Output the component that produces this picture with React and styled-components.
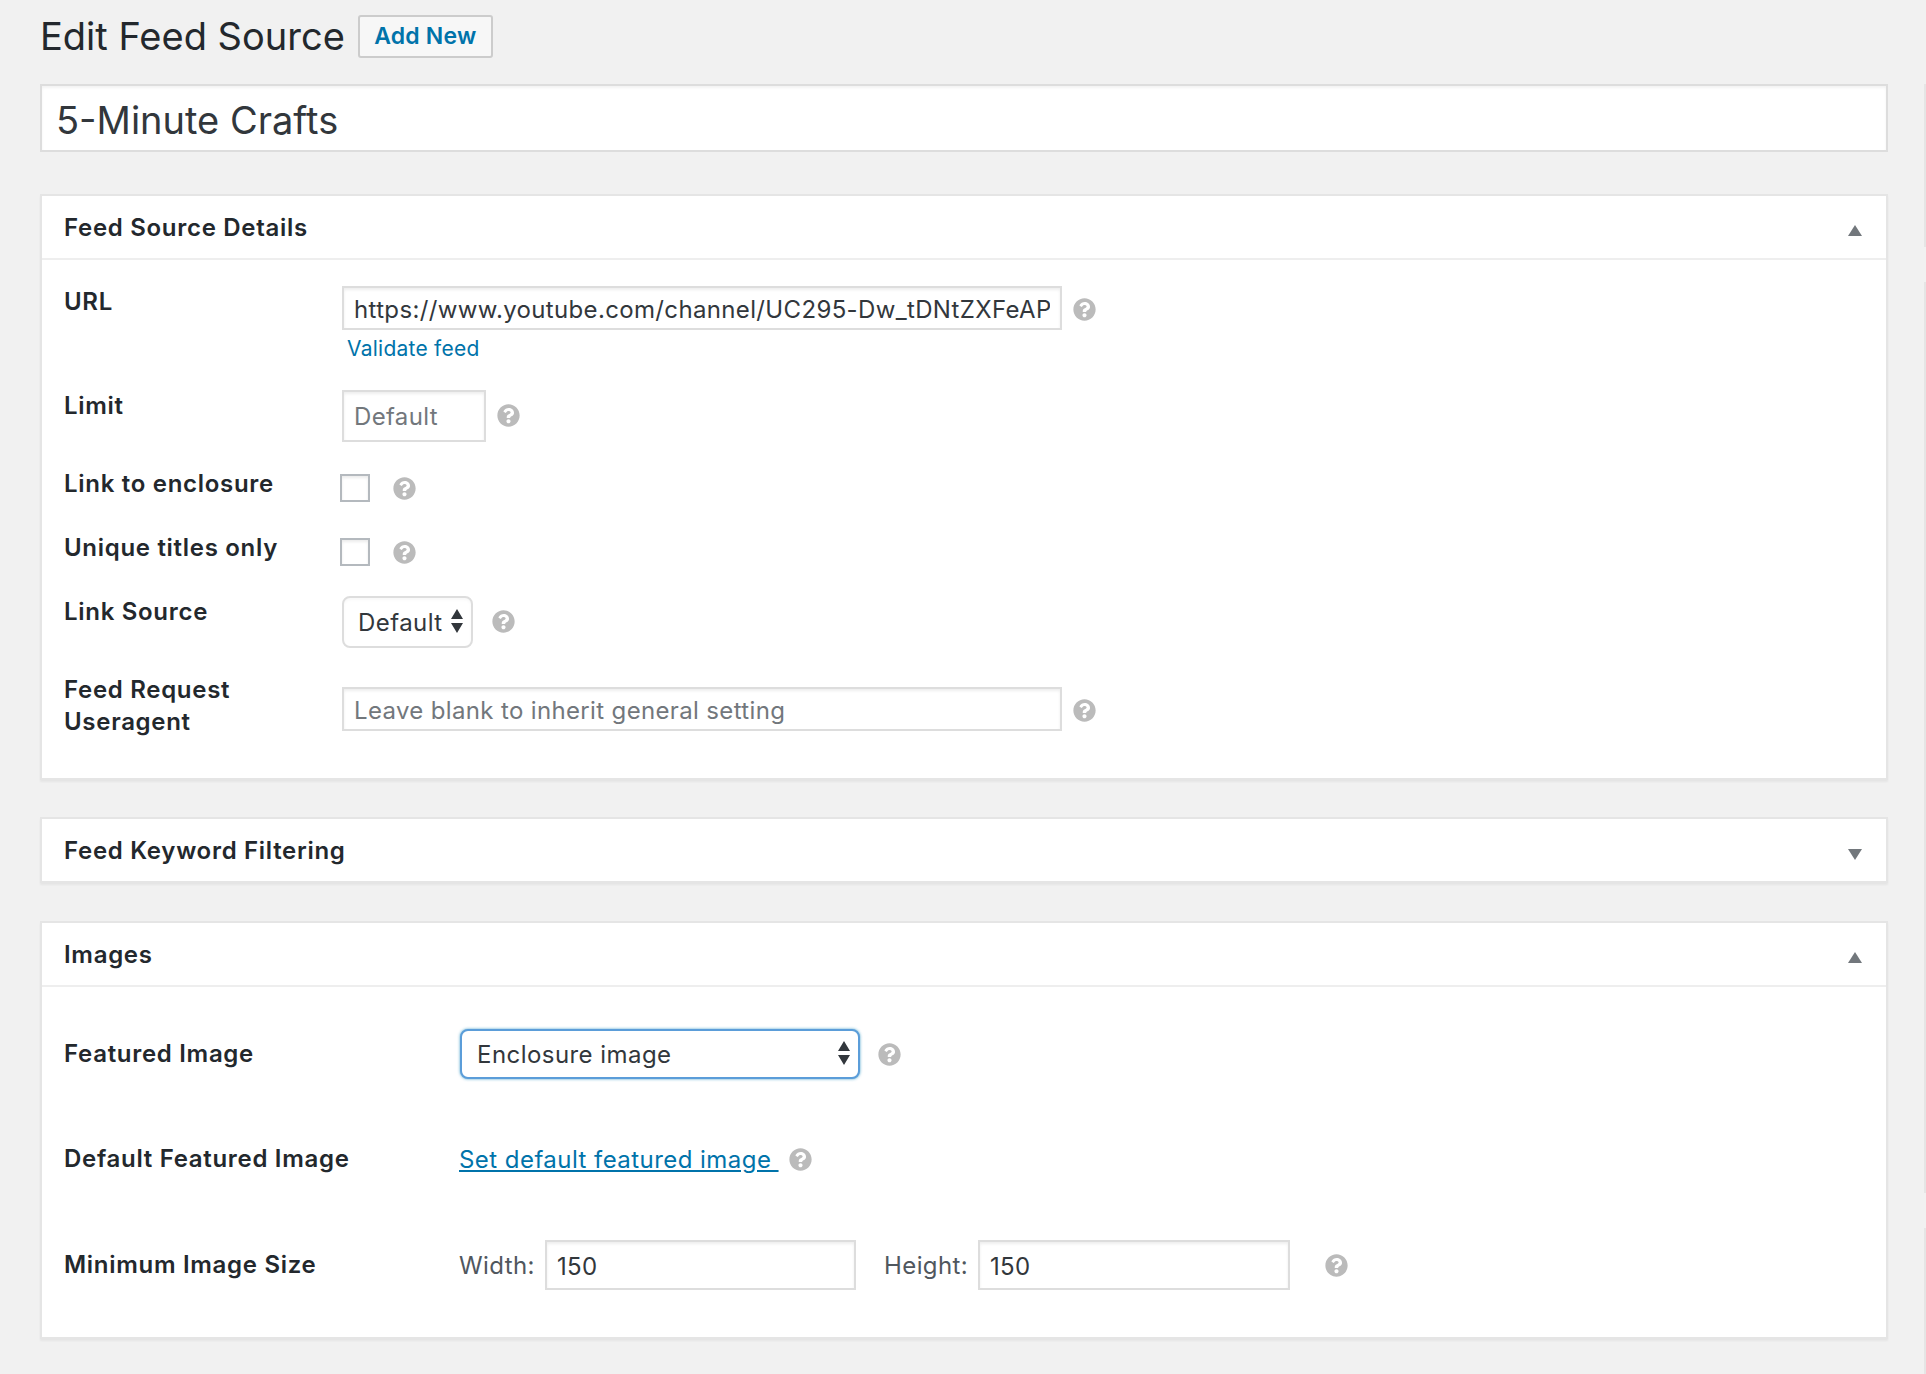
import React from "react";
import styled, { createGlobalStyle } from "styled-components";
import { FaQuestionCircle } from "react-icons/fa";

const Global = createGlobalStyle`
  html, body { margin: 0; padding: 0; background: #f1f1f1; }
  body { font-family: Inter, "Noto Sans", "Liberation Sans", sans-serif; color: #23282d; overflow: hidden; }
  #root { height: 1374px; overflow: hidden; }
`;

const Page = styled.div`
  display: flex;
  align-items: flex-start;
  padding-left: 40px;
  width: 1926px;
  box-sizing: border-box;
`;

const Main = styled.main`
  width: 1848px;
  flex: none;
`;

const TitleBar = styled.div`
  display: flex;
  align-items: center;
  height: 44px;
  margin-top: 14px;
  gap: 13px;
`;

const Heading = styled.h1`
  margin: 0;
  font-size: 38px;
  line-height: 44px;
  font-weight: 400;
  color: #23282d;
`;

const AddNew = styled.a`
  display: flex;
  align-items: center;
  justify-content: center;
  width: 135px;
  height: 43px;
  box-sizing: border-box;
  background: #f7f7f7;
  border: 2px solid #ccc;
  border-radius: 3px;
  color: #0073aa;
  font-size: 23px;
  font-weight: 600;
  letter-spacing: 0.2px;
`;

const TitleInput = styled.input`
  display: block;
  width: 100%;
  height: 68px;
  margin-top: 26px;
  padding: 3px 14px 0;
  box-sizing: border-box;
  border: 2px solid #ddd;
  outline: none;
  background: #fff;
  box-shadow: inset 0 2px 3px rgba(0, 0, 0, 0.05);
  font-family: inherit;
  font-size: 38px;
  color: #32373c;
`;

const Panel = styled.section`
  margin-top: ${(p) => p.$top}px;
  background: #fff;
  border: 2px solid #e5e5e5;
  box-shadow: 0 2px 2px rgba(0, 0, 0, 0.05);
  box-sizing: border-box;
`;

const PanelHead = styled.header`
  display: flex;
  align-items: center;
  justify-content: space-between;
  height: 62px;
  padding: 0 24px 0 22px;
  box-sizing: content-box;
  border-bottom: ${(p) => (p.$open ? "2px solid #eee" : "none")};
`;

const PanelTitle = styled.h2`
  margin: 0;
  font-size: 24px;
  font-weight: 600;
  letter-spacing: 0.7px;
  color: #23282d;
`;

const Toggle = styled.svg`
  width: 14px;
  height: 11px;
  margin-top: ${(p) => p.$down}px;
  fill: #72777c;
`;

const Body = styled.div`
  padding: ${(p) => p.$pad};
`;

const Row = styled.div`
  display: grid;
  grid-template-columns: ${(p) => p.$col}px 1fr;
  margin-top: ${(p) => p.$top || 0}px;
  min-height: ${(p) => p.$h || 0}px;
  align-items: ${(p) => p.$align || "start"};
`;

const Label = styled.div`
  font-size: 24px;
  font-weight: 600;
  letter-spacing: 0.7px;
  line-height: 32px;
  color: #23282d;
  margin-top: ${(p) => p.$top || 0}px;
`;

const Field = styled.div`
  display: flex;
  align-items: center;
  gap: ${(p) => p.$gap || 11}px;
`;

const Stack = styled.div`
  display: flex;
  flex-direction: column;
`;

const TextInput = styled.input`
  width: ${(p) => p.$w}px;
  height: ${(p) => p.$h || 44}px;
  padding: ${(p) => p.$inset ?? 2}px 10px 0;
  box-sizing: border-box;
  border: 2px solid #ddd;
  outline: none;
  background: #fff;
  box-shadow: inset 0 2px 3px rgba(0, 0, 0, 0.07);
  font-family: inherit;
  font-size: 24px;
  letter-spacing: 0.35px;
  color: #32373c;
  &::placeholder { color: #72777c; opacity: 1; }
`;

const SmallLink = styled.a`
  margin: 6px 0 0 5px;
  font-size: 21px;
  letter-spacing: 0.25px;
  line-height: 26px;
  color: #0073aa;
`;

const Link = styled.a`
  font-size: 24px;
  letter-spacing: 0.45px;
  color: #0073aa;
  text-decoration: underline;
  white-space: pre;
`;

const Check = styled.input.attrs({ type: "checkbox" })`
  appearance: none;
  width: 30px;
  height: 28px;
  margin: 0 0 0 -2px;
  box-sizing: border-box;
  background: #fff;
  border: 2px solid #b4b9be;
  box-shadow: inset 0 2px 3px rgba(0, 0, 0, 0.08);
`;

const SelectWrap = styled.div`
  position: relative;
  width: ${(p) => p.$w}px;
  height: ${(p) => p.$h}px;
  margin-left: ${(p) => p.$left || 0}px;
`;

const Select = styled.select`
  appearance: none;
  display: block;
  width: 100%;
  height: 100%;
  padding: 0 0 0 ${(p) => p.$pad}px;
  box-sizing: border-box;
  background: #fff;
  border: 2px solid ${(p) => (p.$focus ? "#5b9dd9" : "#ddd")};
  border-radius: 8px;
  outline: none;
  box-shadow: ${(p) => (p.$focus ? "0 0 3px rgba(30, 140, 190, 0.8)" : "inset 0 2px 3px rgba(0, 0, 0, 0.03)")};
  font-family: inherit;
  font-size: 24px;
  letter-spacing: 0.45px;
  color: #32373c;
`;

const Arrows = styled.svg`
  position: absolute;
  right: 10px;
  top: 50%;
  width: 12px;
  height: 24px;
  margin-top: -13px;
  fill: #32373c;
  pointer-events: none;
`;

const FieldText = styled.span`
  flex: none;
  width: ${(p) => p.$w}px;
  margin-left: ${(p) => p.$left || 0}px;
  font-size: 24px;
  letter-spacing: 0.4px;
  color: #50575e;
`;

const SizeRow = styled.div`
  display: flex;
  align-items: center;
`;

const Side = styled.aside`
  flex: none;
  margin-left: 36px;
  width: 20px;
  margin-top: 84px;
`;

const SideBox = styled.div`
  height: ${(p) => p.$h}px;
  margin-bottom: 35px;
  background: #fff;
  border: 2px solid #e5e5e5;
  box-sizing: border-box;
`;

const HelpIcon = styled(FaQuestionCircle)`
  display: block;
  flex: none;
  width: 23px;
  height: 23px;
  color: #bbb;
  margin-left: ${(p) => p.$left || 0}px;
  margin-top: ${(p) => p.$down || 0}px;
`;

const Help = (p) => <HelpIcon {...p} />;

const Up = () => (
  <Toggle $down={6} viewBox="0 0 14 11"><path d="M7 0l7 11H0z" /></Toggle>
);
const Down = () => (
  <Toggle $down={8} viewBox="0 0 14 11"><path d="M0 0h14L7 11z" /></Toggle>
);
const UpDown = () => (
  <Arrows viewBox="0 0 12 24"><path d="M6 0l6 10H0zM0 14h12l-6 10z" /></Arrows>
);

export default function App() {
  return (
    <Page>
      <Global />
      <Main>
        <TitleBar>
          <Heading>Edit Feed Source</Heading>
          <AddNew>Add New</AddNew>
        </TitleBar>
        <TitleInput readOnly value="5-Minute Crafts" />

        <Panel $top={42}>
          <PanelHead $open>
            <PanelTitle>Feed Source Details</PanelTitle>
            <Up />
          </PanelHead>
          <Body $pad="26px 22px 40px">
            <Row $col={278}>
              <Label>URL</Label>
              <Stack>
                <Field>
                  <TextInput $w={720} readOnly value="https://www.youtube.com/channel/UC295-Dw_tDNtZXFeAP" />
                  <Help $down={3} />
                </Field>
                <SmallLink>Validate feed</SmallLink>
              </Stack>
            </Row>
            <Row $col={278} $top={28}>
              <Label>Limit</Label>
              <Field>
                <TextInput $w={144} $h={52} $inset={0} placeholder="Default" />
                <Help $down={-2} />
              </Field>
            </Row>
            <Row $col={278} $top={32}>
              <Label $top={-6}>Link to enclosure</Label>
              <Field $gap={23}>
                <Check />
                <Help />
              </Field>
            </Row>
            <Row $col={278} $top={36}>
              <Label $top={-6}>Unique titles only</Label>
              <Field $gap={23}>
                <Check />
                <Help />
              </Field>
            </Row>
            <Row $col={278} $top={30}>
              <Label>Link Source</Label>
              <Field $gap={19}>
                <SelectWrap $w={131} $h={52}>
                  <Select $pad={14} defaultValue="Default"><option>Default</option></Select>
                  <UpDown />
                </SelectWrap>
                <Help $down={-1} />
              </Field>
            </Row>
            <Row $col={278} $top={39}>
              <Label $top={-13}>Feed Request<br />Useragent</Label>
              <Field>
                <TextInput $w={720} placeholder="Leave blank to inherit general setting" />
                <Help $down={2} />
              </Field>
            </Row>
          </Body>
        </Panel>

        <Panel $top={37}>
          <PanelHead>
            <PanelTitle>Feed Keyword Filtering</PanelTitle>
            <Down />
          </PanelHead>
        </Panel>

        <Panel $top={38}>
          <PanelHead $open>
            <PanelTitle>Images</PanelTitle>
            <Up />
          </PanelHead>
          <Body $pad="42px 22px 47px">
            <Row $col={395} $h={50} $align="center">
              <Label>Featured Image</Label>
              <Field $gap={18}>
                <SelectWrap $w={400} $h={50} $left={1}>
                  <Select $focus $pad={15} defaultValue="Enclosure image"><option>Enclosure image</option></Select>
                  <UpDown />
                </SelectWrap>
                <Help />
              </Field>
            </Row>
            <Row $col={395} $h={50} $top={55} $align="center">
              <Label>Default Featured Image</Label>
              <Field $gap={10}>
                <Link>{"Set default featured image "}</Link>
                <Help />
              </Field>
            </Row>
            <Row $col={395} $h={50} $top={56} $align="center">
              <Label>Minimum Image Size</Label>
              <SizeRow>
                <FieldText $w={86}>Width:</FieldText>
                <TextInput $w={311} $h={50} readOnly value="150" />
                <FieldText $w={94} $left={28}>Height:</FieldText>
                <TextInput $w={312} $h={50} readOnly value="150" />
                <Help $left={35} />
              </SizeRow>
            </Row>
          </Body>
        </Panel>
      </Main>
      <Side>
        <SideBox $h={163} />
        <SideBox $h={911} />
        <SideBox $h={200} />
      </Side>
    </Page>
  );
}
